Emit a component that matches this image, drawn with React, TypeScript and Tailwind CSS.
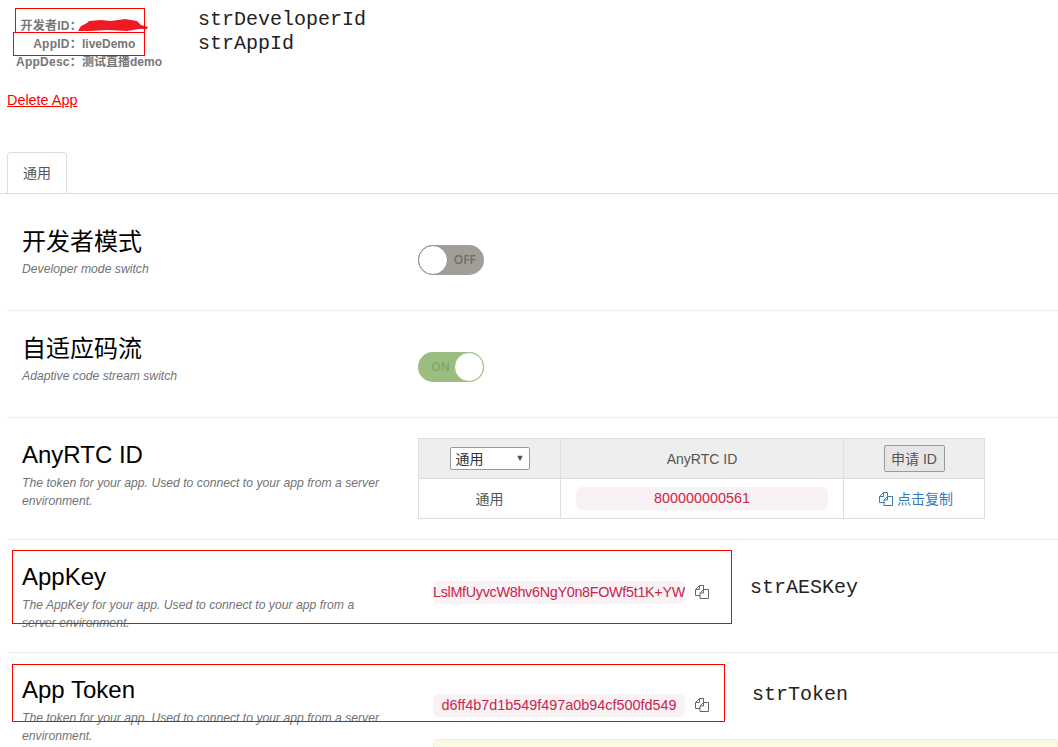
const sans = "font-['Liberation_Sans','Noto_Sans_CJK_SC',sans-serif]";

function CopyIcon({ className }: { className: string }) {
  return (
    <svg viewBox="0 0 14 14" fill="none" stroke="currentColor" strokeWidth="1" className={className}>
      <path d="M5 10.5H0.5V4.5L4.5 0.5H8.5V4" />
      <path d="M4.5 0.5V4.5H0.5" />
      <path d="M5 13.5V8L8.5 4.5H13.5V13.5Z" />
      <path d="M8.5 4.5V8H5" />
    </svg>
  );
}

function Toggle({ on }: { on: boolean }) {
  if (on) {
    return (
      <div className="flex h-[30px] w-[66px] items-center justify-between rounded-full bg-[#9bbd7f]">
        <span className="pl-[13px] font-['Open_Sans',sans-serif] text-xs font-semibold text-[#84a56b]">ON</span>
        <span className="h-[30px] w-[30px] rounded-full border border-[#9bbd7f] bg-white" />
      </div>
    );
  }
  return (
    <div className="flex h-[30px] w-[66px] items-center justify-between rounded-full bg-[#a09e96]">
      <span className="h-[30px] w-[30px] rounded-full border border-[#8f8d86] bg-white" />
      <span className="pr-[8px] font-['Open_Sans',sans-serif] text-xs font-semibold text-[#6f6d69]">OFF</span>
    </div>
  );
}

function Code({ children, className = "" }: { children: string; className?: string }) {
  return (
    <div className={`ml-[15px] h-[23px] w-[252px] overflow-hidden rounded-md bg-[#f9f2f4] text-center text-[14.4px] leading-[23px] whitespace-nowrap text-[#c7254e] ${className}`}>
      {children}
    </div>
  );
}

function Row({ title, desc, height, cjk, children }: { title: string; desc: string; height: string; cjk?: boolean; children: React.ReactNode }) {
  return (
    <div className={`flex border-b border-[#eeeeee] ${height}`}>
      <div className="w-[411px] pt-6 pl-[15px]">
        <h3 className={`h-[27px] text-2xl text-black ${cjk ? "leading-[28px]" : "leading-[26px]"}`}>{title}</h3>
        <p className="mt-[5px] w-[362px] text-[12.2px] leading-[18px] text-[#737373] italic">{desc}</p>
      </div>
      <div className="flex-1">{children}</div>
    </div>
  );
}

function InfoLine({ label, children }: { label: string; children: React.ReactNode }) {
  return (
    <div className="flex leading-[18px]">
      <span className="w-[75px] text-right tracking-[0.25px]">{label}</span>
      <span>{children}</span>
    </div>
  );
}

export default function App() {
  return (
    <div className={`relative h-[747px] w-[1058px] overflow-hidden bg-white ${sans}`}>
      {/* header */}
      <div className="flex h-[152px] flex-col pl-[7px]">
        <div className="flex">
          <div className="w-[191px] pt-[17px] text-xs font-bold text-[#777777]">
            <InfoLine label="开发者ID："> </InfoLine>
            <InfoLine label="AppID：">liveDemo</InfoLine>
            <InfoLine label="AppDesc：">测试直播demo</InfoLine>
          </div>
          <div className="pt-[8px] font-['Liberation_Mono',monospace] text-xl leading-6 text-[#222222]">
            <div>strDeveloperId</div>
            <div>strAppId</div>
          </div>
        </div>
        <a className="mt-[19px] text-[14.4px] leading-5 text-[#ff0000] underline">Delete App</a>
      </div>

      {/* tabs */}
      <div className="flex h-[42px] border-b border-[#dddddd] pl-[7px]">
        <div className="flex h-[41px] w-[60px] items-center justify-center rounded-t border border-b-0 border-[#dddddd] bg-white text-sm text-[#555555]">
          通用
        </div>
      </div>

      <div className="pt-[10px] pl-[7px]">
        <Row cjk title="开发者模式" desc="Developer mode switch" height="h-[107px]">
          <div className="pt-[41px]">
            <Toggle on={false} />
          </div>
        </Row>
        <Row cjk title="自适应码流" desc="Adaptive code stream switch" height="h-[107px]">
          <div className="pt-[41px]">
            <Toggle on />
          </div>
        </Row>
        <Row
          title="AnyRTC ID"
          desc="The token for your app. Used to connect to your app from a server environment."
          height="h-[122px]"
        >
          <div className="pt-5">
            <table className="w-[567px] table-fixed border-collapse text-sm text-[#555555]">
              <tbody>
                <tr className="h-[40px] bg-[#eeeeee]">
                  <td className="w-[142px] border border-[#dddddd]">
                    <div className="mx-auto flex h-[23px] w-[80px] items-center justify-between rounded-[2px] border border-[#999999] bg-white pr-[4px] pl-[5px] text-[#333333]">
                      <span>通用</span>
                      <span className="text-[9px] text-[#555555]">▼</span>
                    </div>
                  </td>
                  <td className="border border-[#dddddd] text-center">AnyRTC ID</td>
                  <td className="w-[141px] border border-[#dddddd]">
                    <div className="mx-auto flex h-[27px] w-[61px] items-center justify-center rounded-[2px] border border-[#999999] bg-[#e6e6e6] text-[#555555]">
                      申请 ID
                    </div>
                  </td>
                </tr>
                <tr className="h-[40px]">
                  <td className="border border-[#dddddd] text-center">通用</td>
                  <td className="border border-[#dddddd] px-[15px]">
                    <div className="h-[23px] rounded-md bg-[#f9f2f4] text-center text-[14.4px] leading-[23px] text-[#c7254e]">
                      800000000561
                    </div>
                  </td>
                  <td className="border border-[#dddddd]">
                    <div className="flex items-center justify-center gap-[4px] pl-[4px] text-[#337ab7]">
                      <CopyIcon className="h-[14px] w-[14px]" />
                      <span>点击复制</span>
                    </div>
                  </td>
                </tr>
              </tbody>
            </table>
          </div>
        </Row>
        <Row
          title="AppKey"
          desc="The AppKey for your app. Used to connect to your app from a server environment."
          height="h-[113px]"
        >
          <div className="flex items-start pt-[41px]">
            <Code className="tracking-[-0.32px]">LslMfUyvcW8hv6NgY0n8FOWf5t1K+YW</Code>
            <CopyIcon className="mt-[4px] ml-[10px] h-[14px] w-[14px] text-[#666666]" />
            <span className="ml-[41px] font-['Liberation_Mono',monospace] text-xl leading-[14px] text-[#222222]">strAESKey</span>
          </div>
        </Row>
        <Row
          title="App Token"
          desc="The token for your app. Used to connect to your app from a server environment."
          height="h-[120px]"
        >
          <div className="flex items-start pt-[41px]">
            <Code>d6ff4b7d1b549f497a0b94cf500fd549</Code>
            <CopyIcon className="mt-[4px] ml-[10px] h-[14px] w-[14px] text-[#666666]" />
            <span className="ml-[43px] font-['Liberation_Mono',monospace] text-xl leading-[2px] text-[#222222]">strToken</span>
          </div>
          <div className="mt-[22px] ml-[15px] h-[40px] rounded border border-[#faebcc] bg-[#fcf8e3]" />
        </Row>
      </div>

      {/* red marks drawn over the screenshot */}
      <svg viewBox="0 0 72 14" className="absolute top-[18px] left-[77px] h-[14px] w-[72px]">
        <path d="M1 13 L4 8 L10 5 L12 3 L24 2 L34 3 L48 1 L60 3 L64 7 L71 9 L70 11 L62 11 L50 13 L30 12 L14 13 Z" fill="#ed1c24" />
      </svg>
      <div className="absolute top-[8px] left-[15px] h-[25px] w-[130px] border border-[#ff0000]" />
      <div className="absolute top-[32px] left-[13px] h-[24px] w-[132px] border border-[#ff0000]" />
      <div className="absolute top-[550px] left-[12px] h-[74px] w-[720px] border border-[#ff0000]" />
      <div className="absolute top-[664px] left-[12px] h-[58px] w-[713px] border border-[#ff0000]" />
    </div>
  );
}
